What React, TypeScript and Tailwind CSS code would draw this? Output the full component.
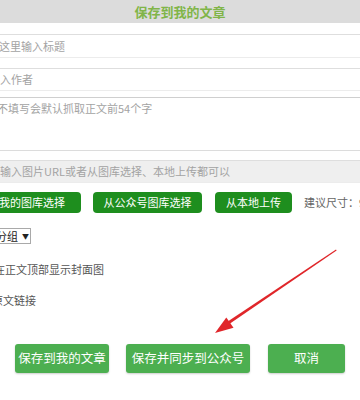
import React from 'react'

const font = { fontFamily: '"Microsoft YaHei", "Noto Sans CJK SC", "Liberation Sans", sans-serif' }

function Field({ h, mt, gray, text, top, textIndent }: { h: string; mt: string; gray?: boolean; text: string; top?: boolean; textIndent: string }) {
  return (
    <div
      className={`${h} ${mt} -ml-[20px] w-[400px] border-t border-b border-t-[#dedede] border-b-[#ececec] ${gray ? 'bg-[#efefef]' : 'bg-white'} flex ${top ? 'items-start pt-[3px]' : 'items-center'} text-[11px] text-[#a3a3a3]`}
    >
      <span className={`whitespace-nowrap ${textIndent}`}>{text}</span>
    </div>
  )
}

export default function App() {
  return (
    <div className="relative w-[360px] h-[400px] overflow-hidden bg-white" style={font}>
      <div className="h-[23px] bg-[#dcdcdc] flex items-center justify-center text-[13px] font-bold text-[#80b548]">
        保存到我的文章
      </div>

      <Field h="h-[24px]" mt="mt-[11px]" text="这里输入标题" textIndent="ml-[19px]" />
      <Field h="h-[23px]" mt="mt-[10px]" text="入作者" textIndent="ml-[20px]" />
      <div className="h-[54px] mt-[6px] -ml-[20px] w-[400px] border-t border-b border-t-[#cfcfcf] border-b-[#dcdcdc] bg-white pt-[2px] text-[11px] text-[#a3a3a3]">
        <span className="whitespace-nowrap ml-[17px]">不填写会默认抓取正文前54个字</span>
      </div>
      <Field h="h-[23px]" mt="mt-[9px]" gray text="输入图片URL或者从图库选择、本地上传都可以" textIndent="ml-[20px]" />

      <div className="mt-[9px] h-[21px] flex items-center text-[11px] whitespace-nowrap">
        <div className="shrink-0 -ml-[17px] w-[98px] h-full rounded-[4px] bg-[#1e8e1e] text-white flex items-center justify-center">我的图库选择</div>
        <div className="shrink-0 ml-[12px] w-[109px] h-full rounded-[4px] bg-[#1e8e1e] text-white flex items-center justify-center">从公众号图库选择</div>
        <div className="shrink-0 ml-[13px] w-[77px] h-full rounded-[4px] bg-[#1e8e1e] text-white flex items-center justify-center">从本地上传</div>
        <span className="shrink-0 ml-[12px] text-[#666]">建议尺寸：900*500</span>
      </div>

      <div className="mt-[15px] -ml-[5px] w-[36px] h-[16px] border border-[#a9a9a9] bg-white flex items-center text-[11px] text-[#222] whitespace-nowrap">
        <span>分组</span>
        <span className="ml-[4px] text-[7px]">▼</span>
      </div>

      <div className="mt-[18px] -ml-[6px] h-[14px] flex items-center text-[11px] text-[#555] whitespace-nowrap">在正文顶部显示封面图</div>
      <div className="mt-[17px] -ml-[8px] h-[14px] flex items-center text-[11px] text-[#555] whitespace-nowrap">原文链接</div>

      <div className="mt-[37px] h-[29px] flex text-[12.5px] text-white whitespace-nowrap">
        <div className="shrink-0 ml-[15px] w-[94px] rounded-[3px] bg-[#4caf50] shadow-[0_1px_2px_rgba(0,0,0,0.2)] flex items-center justify-center">保存到我的文章</div>
        <div className="shrink-0 ml-[17px] w-[124px] rounded-[3px] bg-[#4caf50] shadow-[0_1px_2px_rgba(0,0,0,0.2)] flex items-center justify-center">保存并同步到公众号</div>
        <div className="shrink-0 ml-[18px] w-[77px] rounded-[3px] bg-[#4caf50] shadow-[0_1px_2px_rgba(0,0,0,0.2)] flex items-center justify-center">取消</div>
      </div>

      <svg className="absolute left-0 top-0 pointer-events-none" width="360" height="400" viewBox="0 0 360 400">
        <polygon points="336,249.5 336.6,250.5 228.6,324.5 227,322" fill="#e0262a" />
        <polygon points="215,333 233.5,327.8 226.3,317.6" fill="#e0262a" />
      </svg>
    </div>
  )
}
